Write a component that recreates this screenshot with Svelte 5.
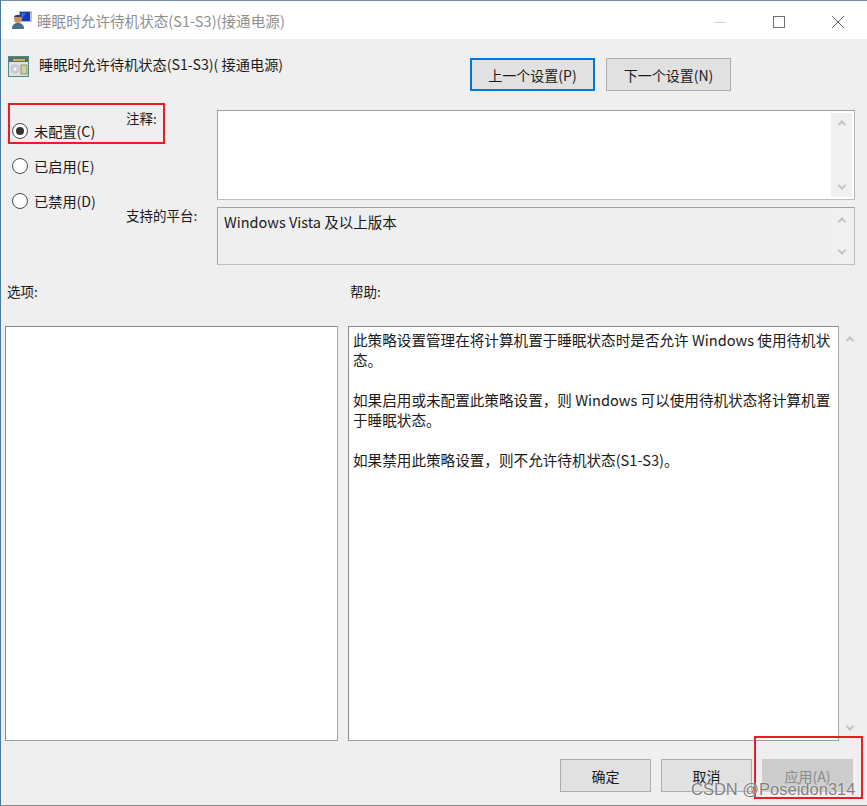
<script>
  const radios = [
    { label: '未配置(C)', checked: true },
    { label: '已启用(E)', checked: false },
    { label: '已禁用(D)', checked: false }
  ];
</script>

<div class="win">
  <header class="titlebar">
    <svg class="appicon" width="22" height="22" viewBox="0 0 22 22">
      <rect x="8" y="2" width="13" height="11" fill="#b9bcc2" />
      <rect x="9" y="3" width="10" height="9" fill="#1238b8" />
      <path d="M10 4l5 0-4 6z" fill="#2f6fe0" />
      <circle cx="7" cy="10" r="4" fill="#c9925f" />
      <path d="M1 20c0-5 3-6 6-6s6 1 6 6z" fill="#4b6f8f" />
      <path d="M3 8c1-3 7-3 8 0z" fill="#33414f" />
    </svg>
    <span class="wintitle">睡眠时允许待机状态(S1-S3)(接通电源)</span>
    <div class="controls">
      <svg width="14" height="14" viewBox="0 0 14 14"><path d="M1 7.5h12" stroke="#d8d8d8" fill="none" /></svg>
      <svg width="14" height="14" viewBox="0 0 14 14"><rect x="1.5" y="1.5" width="11" height="11" stroke="#707070" fill="none" /></svg>
      <svg width="14" height="14" viewBox="0 0 14 14"><path d="M1 1l12 12M13 1L1 13" stroke="#707070" fill="none" /></svg>
    </div>
  </header>

  <div class="body">
    <div class="head">
      <svg class="policyicon" width="21" height="21" viewBox="0 0 21 21">
        <rect x="0.5" y="0.5" width="20" height="20" fill="#dfe4dc" stroke="#4f8a8a" />
        <rect x="1" y="1" width="19" height="5" fill="#5f6f68" />
        <rect x="5" y="3" width="12" height="2" fill="#c9b458" />
        <circle cx="7" cy="13" r="5" fill="#cfc9dc" />
        <circle cx="7" cy="13" r="1.5" fill="#fff" />
        <rect x="13" y="9" width="6" height="9" fill="#d8cfa0" stroke="#6f7a50" stroke-width=".7" />
      </svg>
      <span class="policy">睡眠时允许待机状态(S1-S3)( 接通电源)</span>
      <div class="nav">
        <button class="btn primary">上一个设置(P)</button>
        <button class="btn">下一个设置(N)</button>
      </div>
    </div>

    <div class="config">
      <div class="radios">
        {#each radios as r}
          <label class="radio">
            <span class="dot" class:on={r.checked}></span>
            <span>{r.label}</span>
          </label>
        {/each}
      </div>
      <div class="fields">
        <span class="lab first">注释:</span>
        <div class="box comment">
          <div class="sb"><span class="up"></span><span class="down"></span></div>
        </div>
        <span class="lab second">支持的平台:</span>
        <div class="box platform">
          <span class="ptext">Windows Vista 及以上版本</span>
          <div class="sb"><span class="up"></span><span class="down"></span></div>
        </div>
      </div>
    </div>

    <div class="labels">
      <span class="opt">选项:</span>
      <span>帮助:</span>
    </div>

    <div class="panes">
      <div class="options"></div>
      <div class="help">
        <p>此策略设置管理在将计算机置于睡眠状态时是否允许 Windows 使用待机状态。</p>
        <p>如果启用或未配置此策略设置，则 Windows 可以使用待机状态将计算机置于睡眠状态。</p>
        <p>如果禁用此策略设置，则不允许待机状态(S1-S3)。</p>
      </div>
      <div class="helpsb"><span class="up"></span><span class="down"></span></div>
    </div>

    <footer class="foot">
      <button class="btn wide">确定</button>
      <button class="btn wide">取消</button>
      <button class="btn wide disabled">应用(A)</button>
    </footer>
  </div>

  <div class="mark one"></div>
  <div class="mark two"></div>
  <div class="wm">CSDN @Poseidon314</div>
</div>

<style>
  :global(body) {
    margin: 0;
    background: #f0f0f0;
  }
  .win {
    position: relative;
    width: 867px;
    height: 806px;
    box-sizing: border-box;
    overflow: hidden;
    display: flex;
    flex-direction: column;
    background: #efefef;
    border-top: 1px solid #6f8fa8;
    border-left: 1px solid #4a7a9f;
    border-bottom: 1px solid #8a8a8a;
    font-family: "Noto Sans CJK SC", "Noto Sans", sans-serif;
    font-size: 14px;
    color: #1a1a1a;
  }
  .titlebar {
    height: 38px;
    flex: none;
    background: #fff;
    display: flex;
    align-items: center;
    padding-left: 10px;
  }
  .appicon { margin-right: 4px; }
  .wintitle { color: #8f8f8f; font-size: 14.6px; }
  .controls {
    margin-left: auto;
    display: flex;
    gap: 45px;
    margin-right: 22px;
    margin-top: 3px;
  }
  .body { flex: 1; display: flex; flex-direction: column; }
  .head {
    display: flex;
    padding: 14px 0 0 7px;
    height: 57px;
    box-sizing: border-box;
  }
  .policyicon { margin-top: 3px; }
  .policy { margin-left: 10px; font-size: 14.2px; line-height: 20px; margin-top: 1px; }
  .nav { position: absolute; left: 469px; top: 57px; display: flex; gap: 11px; }
  .btn {
    font: inherit;
    font-size: 14px;
    color: #1a1a1a;
    width: 125px;
    height: 33px;
    padding: 0;
    background: #e1e1e1;
    border: 1px solid #adadad;
    box-sizing: border-box;
  }
  .btn.primary { border: 2px solid #0078d7; }
  .btn.wide { width: 91px; height: 33px; }
  .btn.disabled { background: #cccccc; border-color: #cccccc; color: #8a8a8a; }
  .config { display: flex; margin-top: 14px; height: 155px; }
  .radios { width: 125px; padding-left: 11px; box-sizing: border-box; margin-top: 3px; }
  .radio { display: flex; align-items: center; gap: 6px; height: 35px; font-size: 14.2px; }
  .dot {
    width: 14px;
    height: 14px;
    border: 1px solid #4a4a4a;
    border-radius: 50%;
    background: #fff;
    position: relative;
    flex: none;
  }
  .dot.on::after {
    content: "";
    position: absolute;
    inset: 3px;
    border-radius: 50%;
    background: #333;
  }
  .fields {
    display: grid;
    grid-template-columns: 91px 638px;
    grid-template-rows: 90px 58px;
    row-gap: 7px;
  }
  .lab { font-size: 13.5px; line-height: 18px; }
  .lab.first { margin-top: -1px; }
  .lab.second { margin-top: -1px; margin-left: 0; }
  .box {
    position: relative;
    box-sizing: border-box;
    border: 1px solid #a0a0a0;
    border-right-color: #b8b8b8;
    border-bottom-color: #c0c0c0;
    display: flex;
    justify-content: space-between;
  }
  .comment { background: #fff; }
  .platform { background: #efefef; padding: 4px 0 0 6px; }
  .ptext { font-size: 14.5px; line-height: 20px; }
  .sb {
    position: absolute;
    right: 2px;
    top: 2px;
    bottom: 2px;
    width: 21px;
    background: #f0f0f0;
    display: flex;
    flex-direction: column;
    justify-content: space-between;
    align-items: center;
    padding: 7px 0;
    box-sizing: border-box;
  }
  .up, .down {
    width: 6px;
    height: 6px;
    border: solid #c2c2c2;
    border-width: 2px 0 0 2px;
    transform: rotate(45deg) translate(1px, 1px);
    box-sizing: border-box;
    display: block;
  }
  .down { transform: rotate(225deg) translate(1px, 1px); }
  .labels {
    display: flex;
    margin-top: 16px;
    padding-left: 6px;
    font-size: 13.5px;
    line-height: 20px;
  }
  .opt { width: 343px; }
  .panes { display: flex; margin-top: 25px; margin-left: 4px; height: 415px; }
  .options, .help {
    box-sizing: border-box;
    background: #fff;
    border: 1px solid #8c8c8c;
    border-right-color: #a8a8a8;
    border-bottom-color: #a0a0a0;
  }
  .options { width: 333px; margin-right: 10px; }
  .help { width: 491px; padding: 0 4px; font-size: 14.6px; line-height: 20px; }
  .help p { margin: 0 0 20px; }
  .help p:first-child { margin-top: 3px; }
  .helpsb {
    width: 21px;
    display: flex;
    flex-direction: column;
    justify-content: space-between;
    align-items: center;
    padding: 10px 0;
    box-sizing: border-box;
  }
  .foot { display: flex; gap: 10px; padding: 18px 0 0 559px; }
  .mark { position: absolute; border: 2px solid #ed1c24; box-sizing: border-box; }
  .mark.one { left: 7px; top: 102px; width: 157px; height: 41px; }
  .mark.two { left: 753px; top: 735px; width: 109px; height: 63px; }
  .wm {
    position: absolute;
    left: 690px;
    top: 778px;
    font-family: "Liberation Sans", sans-serif;
    font-size: 16.5px;
    line-height: 20px;
    color: #7f7f7f;
    text-shadow: 0 0 2px #fff;
    white-space: nowrap;
  }
</style>
